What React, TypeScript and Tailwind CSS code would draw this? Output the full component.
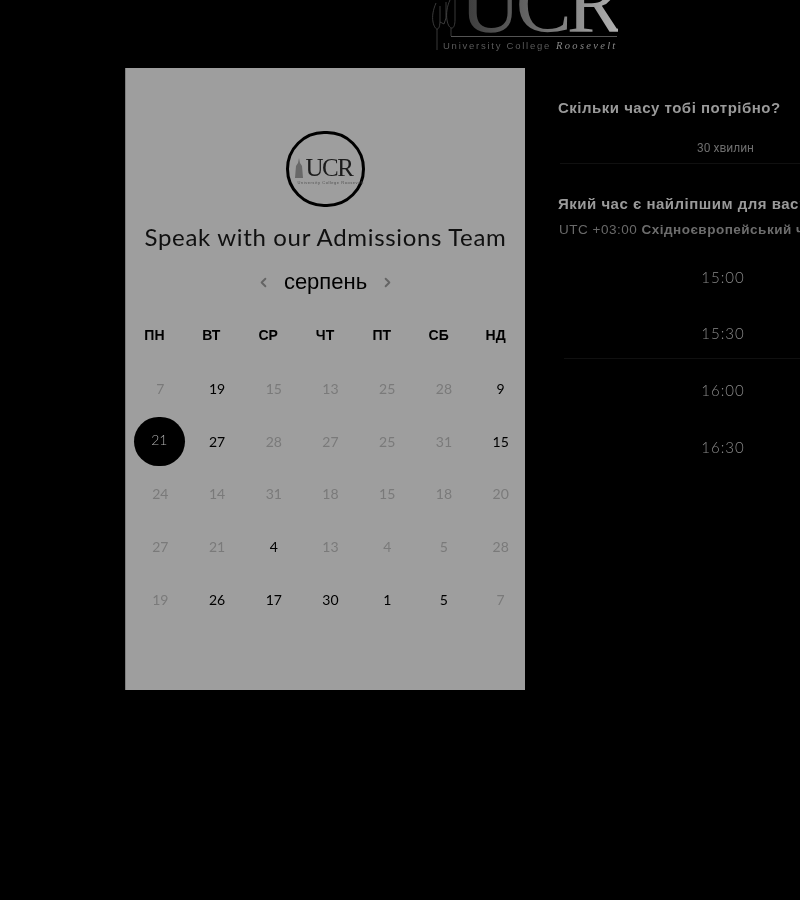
import React from 'react';
import { ChevronLeft, ChevronRight } from 'lucide-react';

const weekdays = ['ПН', 'ВТ', 'СР', 'ЧТ', 'ПТ', 'СБ', 'НД'];

// [day, available]
const days: [number, boolean][] = [
  [7, false], [19, true], [15, false], [13, false], [25, false], [28, false], [9, true],
  [21, false], [27, true], [28, false], [27, false], [25, false], [31, false], [15, true],
  [24, false], [14, false], [31, false], [18, false], [15, false], [18, false], [20, false],
  [27, false], [21, false], [4, true], [13, false], [4, false], [5, false], [28, false],
  [19, false], [26, true], [17, true], [30, true], [1, true], [5, true], [7, false],
];

const times = ['15:00', '15:30', '16:00', '16:30'];

const App: React.FC = () => {
  return (
    <div className="h-[900px] w-[800px] overflow-hidden bg-black">
      <div className="h-full w-full bg-black font-['Lato',sans-serif] opacity-[0.99]">
        {/* top logo, cropped by the window */}
        <header className="flex h-[68px] justify-end overflow-hidden pr-[182px]">
          <div className="relative h-[52px] w-[186px]">
            <svg viewBox="0 0 30 52" className="absolute left-0 top-0 h-[52px] w-[30px] text-[#4a4a4a]" fill="none" stroke="currentColor" strokeWidth="0.8">
              <path d="M4 3 C1 10 0 16 1 22 C2 27 4 29 5 29 C7 29 8 26 8 20 L8 6" />
              <path d="M8 22 L12 24 L14 18 L14 2" />
              <path d="M18 0 C15 6 14 14 15 20 C16 26 18 28 20 28 C22 28 23 24 23 20 L23 0" />
              <path d="M5 29 L5 50" />
              <path d="M19 28 L19 36" />
            </svg>
            <span className="absolute left-[28px] top-[-29px] font-['Liberation_Serif',serif] text-[84px] leading-[66px] tracking-[-5px] bg-gradient-to-r from-[#3a3a3a] via-[#6e6e6e] to-[#b4b4b4] bg-clip-text text-transparent">
              UCR
            </span>
            <div className="absolute left-[19px] right-[1px] top-[36px] h-px bg-[#555]" />
            <div className="absolute left-[11px] top-[38px] flex items-baseline gap-[5px] whitespace-nowrap">
              <span className="font-['Liberation_Sans',sans-serif] text-[9.5px] tracking-[1.75px] text-[#5c5c5c]">University College</span>
              <span className="font-['Liberation_Serif',serif] text-[10.5px] italic tracking-[2.3px] text-[#8a8a8a]">Roosevelt</span>
            </div>
          </div>
        </header>

        <div className="flex items-start pl-[125px]">
          {/* calendar card */}
          <section className="flex h-[622px] w-[400px] shrink-0 flex-col items-center border-l border-[#808080] bg-[#a0a0a0] pt-[63px]">
            <div className="flex h-[76px] w-[79px] items-center justify-center rounded-full border-[3px] border-black">
              <div className="relative flex h-[36px] w-[62px] items-start justify-center pt-[2px]">
                <svg viewBox="0 0 8 20" className="absolute left-0 top-[7px] h-[20px] w-[8px] text-[#6a6a6a]" fill="currentColor">
                  <path d="M4 0 L5 5 L7 8 L8 20 L0 20 L1 8 L3 5 Z" />
                </svg>
                <span className="ml-[7px] font-['Liberation_Serif',serif] text-[25px] leading-[30px] tracking-[-1.5px] text-[#1c1c1c]">UCR</span>
                <span className="absolute bottom-[2px] left-[3px] whitespace-nowrap font-['Liberation_Sans',sans-serif] text-[4px] leading-[5px] tracking-[0.55px] text-[#555]">
                  University College Roosevelt
                </span>
              </div>
            </div>

            <h1 className="mt-[14px] whitespace-nowrap text-[24px] leading-[32px] tracking-[0.67px] text-[#111]">
              Speak with our Admissions Team
            </h1>

            <div className="mt-[15px] flex h-[28px] items-center">
              <ChevronLeft className="h-[15px] w-[15px] text-[#666]" strokeWidth={3} />
              <span className="mx-[13px] font-['Liberation_Sans',sans-serif] text-[22px] leading-[28px] text-black">серпень</span>
              <ChevronRight className="h-[15px] w-[15px] text-[#666]" strokeWidth={3} />
            </div>

            <div className="mt-[29px] grid w-full grid-cols-7 pr-px">
              {weekdays.map((d) => (
                <div key={d} className="text-center font-['Liberation_Sans',sans-serif] text-[14px] font-bold leading-[20px] text-black">
                  {d}
                </div>
              ))}
            </div>

            <div className="mt-[17px] grid w-[397px] translate-x-[5px] grid-cols-7 grid-rows-[repeat(5,52.75px)]">
              {days.map(([day, available], i) =>
                i === 7 ? (
                  <div key={i} className="flex items-center justify-center">
                    <span className="mr-[2px] flex h-[49px] w-[51px] items-center justify-center rounded-full bg-black pb-[3px] text-[14px] font-light text-[#b0b0b0]">
                      {day}
                    </span>
                  </div>
                ) : (
                  <div
                    key={i}
                    className={`flex items-center justify-center text-[14px] ${available ? 'text-black' : 'text-[#7c7c7c]'}`}
                  >
                    {day}
                  </div>
                )
              )}
            </div>
          </section>

          {/* right side, runs off the window */}
          <section className="ml-[33px] w-[336px] shrink-0 pt-[29px]">
            <h2 className="whitespace-nowrap font-['Liberation_Sans',sans-serif] text-[15px] font-bold leading-[22px] tracking-[0.5px] text-[#9c9c9c]">
              Скільки часу тобі потрібно?
            </h2>
            <div className="ml-[2px] mt-[14px] flex h-[31px] items-center justify-center border-b border-[#111] pr-[3px] font-['Roboto',sans-serif] text-[12px] text-[#6f6f6f]">
              30 хвилин
            </div>
            <h2 className="mt-[29px] whitespace-nowrap font-['Liberation_Sans',sans-serif] text-[15px] font-bold leading-[22px] tracking-[0.5px] text-[#9c9c9c]">
              Який час є найліпшим для вас?
            </h2>
            <p className="ml-px mt-[5px] whitespace-nowrap font-['Liberation_Sans',sans-serif] text-[13.5px] leading-[20px] tracking-[0.5px] text-[#6b6b6b]">
              UTC +03:00 <span className="font-bold text-[#6f6f6f]">Східноєвропейський час</span>
            </p>
            <div className="ml-[6px] mt-[9px] flex flex-col">
              {times.map((t, i) => (
                <div
                  key={t}
                  className={`mb-[3.5px] flex h-[53px] items-center justify-center pr-[12px] pt-[4px] text-[15px] font-light tracking-[1px] text-[#8c8c8c] ${i === 1 ? 'border-b border-[#111]' : ''}`}
                >
                  {t}
                </div>
              ))}
            </div>
          </section>
        </div>
      </div>
    </div>
  );
};

export default App;
